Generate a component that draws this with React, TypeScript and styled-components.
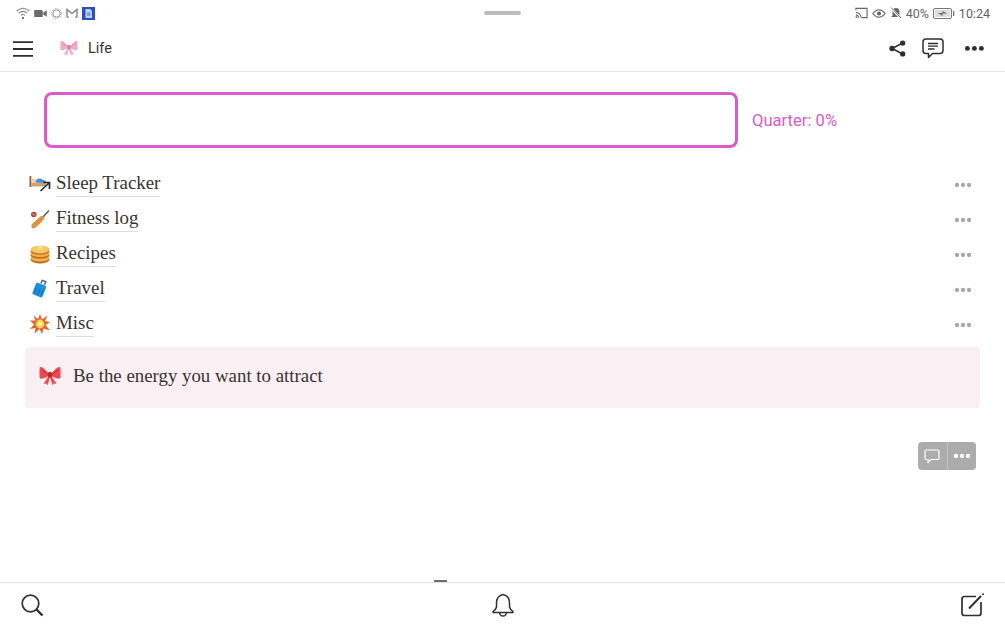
import React from 'react';
import styled, { createGlobalStyle } from 'styled-components';

const GlobalStyle = createGlobalStyle`
  html, body { margin: 0; padding: 0; background: #fff; }
  body { font-family: "Roboto", "Liberation Sans", sans-serif; }
`;

const Page = styled.div`
  position: relative;
  width: 1005px;
  height: 628px;
  display: flex;
  flex-direction: column;
  overflow: hidden;
  background: #fff;
`;

const StatusBar = styled.div`
  height: 26px;
  flex: none;
  display: flex;
  align-items: center;
  justify-content: space-between;
  padding: 0 15px 0 16px;
  color: #6f6f6f;
  font-size: 12px;
`;

const StatusGroup = styled.div`
  display: flex;
  align-items: center;
  gap: 4px;
`;

const DragHandle = styled.div`
  position: absolute;
  top: 11px;
  left: 484px;
  width: 37px;
  height: 4px;
  border-radius: 2px;
  background: #bdbdbd;
`;

const Clock = styled.span`
  font-size: 12.5px;
  color: #5f5f5f;
`;

const Percent = styled.span`
  font-size: 12.5px;
  color: #666;
`;

const TopBar = styled.header`
  height: 45px;
  flex: none;
  display: flex;
  align-items: center;
  padding: 0 20px 0 13px;
  border-bottom: 1px solid #e4e4e4;
`;

const Title = styled.span`
  margin-left: 10px;
  font-size: 14.5px;
  color: #37352f;
`;

const PageIcon = styled.span`
  display: flex;
  margin-left: 27px;
`;

const TopActions = styled.div`
  margin-left: auto;
  display: flex;
  align-items: center;
  gap: 16px;
`;

const MoreButton = styled.span`
  display: flex;
  margin-left: 4px;
`;

const Content = styled.main`
  flex: 1;
  padding: 20px 25px 0;
`;

const ProgressRow = styled.div`
  display: flex;
  align-items: center;
  padding-left: 19px;
  height: 56px;
  gap: 14px;
`;

const ProgressBox = styled.div`
  width: 694px;
  height: 56px;
  box-sizing: border-box;
  border: 3px solid #dc5bc6;
  border-radius: 8px;
`;

const ProgressLabel = styled.span`
  font-size: 16.6px;
  color: #d95cc4;
`;

const PageList = styled.div`
  display: flex;
  flex-direction: column;
  margin-top: 17px;
  padding-right: 5px;
`;

const PageRow = styled.div`
  height: 35px;
  display: flex;
  align-items: center;
  padding-left: 4px;
`;

const RowIcon = styled.span`
  width: 22px;
  height: 22px;
  margin: 2px 5px 0 0;
  display: flex;
  align-items: center;
  justify-content: center;
  flex: none;
`;

const PageName = styled.span`
  font-family: "Liberation Serif", "Times New Roman", serif;
  font-size: 18.9px;
  line-height: 26px;
  height: 26px;
  margin-top: 1px;
  color: #37352f;
  border-bottom: 1px solid #dedddb;
`;

const RowMenu = styled.span`
  margin-left: auto;
  margin-top: 4px;
  display: flex;
  padding-right: 3px;
`;

const Callout = styled.div`
  height: 61px;
  box-sizing: border-box;
  margin-top: 7px;
  display: flex;
  align-items: center;
  gap: 12px;
  padding: 0 14px 4px;
  border-radius: 4px;
  background: #faeff3;
`;

const CalloutText = styled.span`
  font-family: "Liberation Serif", "Times New Roman", serif;
  font-size: 18.85px;
  color: #37352f;
`;

const FloatingActions = styled.div`
  position: absolute;
  top: 442px;
  left: 918px;
  width: 58px;
  height: 28px;
  display: flex;
  border-radius: 4px;
  overflow: hidden;
  background: #acacac;
`;

const FloatingButton = styled.span<{ $divided?: boolean }>`
  flex: 1;
  display: flex;
  align-items: center;
  justify-content: center;
  border-left: ${(p) => (p.$divided ? '1px solid #c4c4c4' : 'none')};
`;

const BottomBar = styled.footer`
  height: 46px;
  flex: none;
  display: flex;
  align-items: center;
  justify-content: space-between;
  padding: 0 20px 2px 20px;
  box-sizing: border-box;
  border-top: 1px solid #dfdfdf;
`;

const SheetGrip = styled.div`
  position: absolute;
  top: 580px;
  left: 434px;
  width: 13px;
  height: 2px;
  background: #6d6d6d;
`;

const Dots = ({ color, size = 3, gap = 6 }: { color: string; size?: number; gap?: number }) => (
  <svg width={gap * 2 + size * 2} height={size * 2} viewBox={`0 0 ${gap * 2 + size * 2} ${size * 2}`}>
    {[0, 1, 2].map((i) => (
      <circle key={i} cx={size + i * gap} cy={size} r={size * 0.72} fill={color} />
    ))}
  </svg>
);

const Bow = ({ light, width }: { light?: boolean; width: number }) => {
  const main = light ? '#f0aec4' : '#f0484e';
  const dark = light ? '#d9829f' : '#c4252c';
  return (
    <svg width={width} viewBox="0 0 22 20">
      <path d="M9.5 7.5 Q6 2.5 2.5 1 Q0.5 0.5 0.5 3 L0.5 11 Q0.8 13.5 3.5 12.5 Q7 11.5 9.5 10 Z" fill={main} />
      <path d="M12.5 7.5 Q16 2.5 19.5 1 Q21.5 0.5 21.5 3 L21.5 11 Q21.2 13.5 18.5 12.5 Q15 11.5 12.5 10 Z" fill={main} />
      <path d="M9.5 10 L4.5 18 L7.5 17.5 L8.5 19.5 L11 11 Z" fill={main} />
      <path d="M12.5 10 L17.5 18 L14.5 17.5 L13.5 19.5 L11 11 Z" fill={main} />
      <path d="M3 4 Q6 6 8.5 8 M19 4 Q16 6 13.5 8" stroke={dark} strokeWidth="0.9" fill="none" />
      <rect x="8.8" y="6" width="4.4" height="5.5" rx="1.6" fill={dark} />
    </svg>
  );
};

const BedIcon = () => (
  <svg width="22" height="17" viewBox="0 0 22 17">
    <rect x="0.5" y="1" width="1.8" height="11" fill="#8f6238" />
    <rect x="2" y="7.5" width="15" height="4" fill="#c9a27a" />
    <rect x="2.5" y="3.5" width="5" height="4" rx="1" fill="#f0d2b0" />
    <path d="M6.5 7.5 Q7.5 3 11 3.5 L17 6 V8 Z" fill="#3f8fd6" />
    <path d="M11.5 16 L20 8 M14.5 7.5 H20.5 V14" stroke="#2b2b2b" strokeWidth="1.7" fill="none" />
  </svg>
);

const CricketIcon = () => (
  <svg width="20" height="20" viewBox="0 0 20 20">
    <path d="M2.5 19 Q0.5 17.5 2 15 L11.5 6.5 L14.5 9.5 Q9.5 15.5 5.5 18.5 Q4 20 2.5 19Z" fill="#e0903f" />
    <path d="M13 8 L19 1.5" stroke="#7a5a3c" strokeWidth="1.6" />
    <circle cx="3.8" cy="5.5" r="2.8" fill="#b4473a" />
    <path d="M2 4.5 L5.5 6.5" stroke="#eecfc8" strokeWidth="0.6" />
  </svg>
);

const PancakeIcon = () => (
  <svg width="20" height="20" viewBox="0 0 20 20">
    <ellipse cx="10" cy="15.5" rx="9.5" ry="4" fill="#bd6f1a" />
    <ellipse cx="10" cy="14" rx="9.5" ry="3.6" fill="#f0b04a" />
    <ellipse cx="10" cy="11" rx="9.5" ry="3.8" fill="#bd6f1a" />
    <ellipse cx="10" cy="9.5" rx="9.5" ry="3.6" fill="#f0b04a" />
    <ellipse cx="10" cy="7" rx="9.5" ry="3.8" fill="#bd6f1a" />
    <ellipse cx="10" cy="5.5" rx="9.5" ry="4" fill="#f5c566" />
    <rect x="7.5" y="2" width="5" height="3.2" rx="1" fill="#fde58a" />
  </svg>
);

const LuggageIcon = () => (
  <svg width="18" height="19" viewBox="0 0 20 20">
    <rect x="3.5" y="5" width="12" height="14" rx="2" transform="rotate(22 10 11)" fill="#1f8fd8" />
    <path d="M11 4.5 L12.5 1 L16.5 2.5 L15 6" stroke="#48667c" strokeWidth="1.6" fill="none" />
    <path d="M6.5 8.5 L3.8 15 M10 10 L7.5 16.5 M13.5 11.5 L11 18" stroke="#0f6aa8" strokeWidth="1" />
  </svg>
);

const BoomIcon = () => (
  <svg width="20" height="20" viewBox="0 0 20 20">
    <path d="M10 0 L12 5.5 L17.5 1.5 L15 7 L20 8 L15.5 11 L20 16.5 L13.5 14.5 L12 20 L9.5 15 L4.5 19.5 L5.5 14 L0 15 L4 10.5 L0 6.5 L5.5 6.5 L3.5 1.5 L8 5Z" fill="#e8622c" />
    <circle cx="10" cy="10" r="4.4" fill="#fbd54a" />
    <circle cx="10" cy="10" r="2" fill="#fff3b8" />
  </svg>
);

const MenuIcon = () => (
  <svg width="20" height="16" viewBox="0 0 20 16">
    <path d="M0 1.2 H20 M0 8 H20 M0 14.8 H20" stroke="#2f2f2f" strokeWidth="1.8" />
  </svg>
);

const ShareIcon = () => (
  <svg width="17" height="17" viewBox="0 0 18 18">
    <circle cx="14.5" cy="3.2" r="2.8" fill="#2f2f2f" />
    <circle cx="3.2" cy="9" r="2.8" fill="#2f2f2f" />
    <circle cx="14.5" cy="14.8" r="2.8" fill="#2f2f2f" />
    <path d="M14.5 3.2 L3.2 9 L14.5 14.8" stroke="#2f2f2f" strokeWidth="1.6" fill="none" />
  </svg>
);

const CommentIcon = () => (
  <svg width="22" height="21" viewBox="0 0 22 21">
    <path d="M4 1 H18 Q21 1 21 4 V12.5 Q21 15.5 18 15.5 H10.5 L6.5 19.5 V15.5 H4 Q1 15.5 1 12.5 V4 Q1 1 4 1Z" fill="none" stroke="#2f2f2f" strokeWidth="1.5" strokeLinejoin="round" />
    <path d="M6 5.5 H16 M6 8.2 H16 M6 11 H12.5" stroke="#2f2f2f" strokeWidth="1.3" />
  </svg>
);

const WifiIcon = () => (
  <svg width="14" height="13" viewBox="0 0 14 13" fill="none" stroke="#8a8a8a" strokeWidth="1.1">
    <path d="M0.7 4 Q7 -1.5 13.3 4" />
    <path d="M2.7 6.2 Q7 2.5 11.3 6.2" />
    <path d="M4.8 8.4 Q7 6.6 9.2 8.4" />
    <circle cx="7" cy="11" r="1.1" fill="#555" stroke="none" />
  </svg>
);

const VideoIcon = () => (
  <svg width="13" height="9" viewBox="0 0 14 10">
    <rect x="0" y="1" width="9.5" height="8" rx="1" fill="#6a6a6a" />
    <path d="M10 4 L14 1.5 V8.5 L10 6Z" fill="#6a6a6a" />
  </svg>
);

const GearIcon = () => (
  <svg width="11" height="11" viewBox="0 0 12 12" fill="none" stroke="#8a8a8a">
    <circle cx="6" cy="6" r="4" strokeWidth="1" />
    <circle cx="6" cy="6" r="5.3" strokeWidth="1" strokeDasharray="1.4 1.4" />
  </svg>
);

const MailIcon = () => (
  <svg width="12" height="10" viewBox="0 0 13 11" fill="none" stroke="#808080" strokeWidth="1.5">
    <path d="M1 10 V1.5 L6.5 6 L12 1.5 V10 M1 10 H3 M10 10 H12" />
  </svg>
);

const DocIcon = () => (
  <svg width="13" height="13" viewBox="0 0 13 13">
    <rect width="13" height="13" fill="#2a4fc4" />
    <path d="M3.5 2 H8 L10 4 V11 H3.5Z" fill="#bcd6f7" />
    <path d="M5 6 H8.5 M5 8 H8.5" stroke="#2a4fc4" strokeWidth="0.8" />
  </svg>
);

const CastIcon = () => (
  <svg width="13" height="12" viewBox="0 0 14 12" fill="none" stroke="#666" strokeWidth="1.2">
    <path d="M1 3 V1 H13 V11 H7" />
    <path d="M1 5.5 Q6 6 6.5 11 M1 8 Q3.5 8.5 4 11" />
    <circle cx="1.5" cy="10.5" r="0.9" fill="#666" stroke="none" />
  </svg>
);

const EyeIcon = () => (
  <svg width="14" height="11" viewBox="0 0 15 11" fill="none" stroke="#666" strokeWidth="1.2">
    <path d="M0.8 5.5 Q7.5 -2.5 14.2 5.5 Q7.5 13.5 0.8 5.5Z" />
    <circle cx="7.5" cy="5.5" r="2.2" fill="#666" stroke="none" />
  </svg>
);

const MutedBellIcon = () => (
  <svg width="12" height="12" viewBox="0 0 12 12">
    <path d="M6 1 Q9.5 1 9.5 5 V8.5 L11 10 H1 L2.5 8.5 V5 Q2.5 1 6 1Z" fill="#666" />
    <path d="M1 1 L11 11.5" stroke="#fff" strokeWidth="2.2" />
    <path d="M1 0.5 L11 11" stroke="#666" strokeWidth="1" />
  </svg>
);

const BatteryIcon = () => (
  <svg width="22" height="11" viewBox="0 0 22 11">
    <rect x="0.5" y="0.5" width="18" height="10" rx="1.5" fill="none" stroke="#777" />
    <rect x="2" y="2" width="15" height="7" fill="#ddd" />
    <path d="M5 5 H9.5 V3 L14 5.5 H9.5 V8Z" fill="#666" />
    <rect x="20" y="3" width="1.3" height="5" fill="#777" />
  </svg>
);

const SearchIcon = () => (
  <svg width="24" height="24" viewBox="0 0 24 24" fill="none" stroke="#2f2f2f">
    <circle cx="10.5" cy="10.5" r="8.3" strokeWidth="1.7" />
    <path d="M16.5 16.5 L22.5 22.5" strokeWidth="2.4" />
  </svg>
);

const BellIcon = () => (
  <svg width="22" height="24" viewBox="0 0 22 24" fill="none" stroke="#2f2f2f" strokeWidth="1.5">
    <path d="M11 1.5 Q17.5 3 17.5 10 V14 Q18 16.5 21 18.5 V19.5 H1 V18.5 Q4 16.5 4.5 14 V10 Q4.5 3 11 1.5Z" strokeLinejoin="round" />
    <path d="M7.5 19.5 Q8 23 11 23 Q14 23 14.5 19.5" />
  </svg>
);

const ComposeIcon = () => (
  <svg width="24" height="24" viewBox="0 0 24 24" fill="none" stroke="#2f2f2f">
    <path d="M15 3.5 H3.5 Q1 3.5 1 6 V20 Q1 22.5 3.5 22.5 H17.5 Q20 22.5 20 20 V9" strokeWidth="1.7" />
    <path d="M8 15.5 L20 3" strokeWidth="1.9" />
    <circle cx="22" cy="1.3" r="1" fill="#2f2f2f" stroke="none" />
  </svg>
);

const FloatComment = () => (
  <svg width="16" height="15" viewBox="0 0 16 15" fill="none" stroke="#fff" strokeWidth="1.2">
    <path d="M2.5 1 H13.5 Q15 1 15 2.5 V9 Q15 10.5 13.5 10.5 H7 L4 13.5 V10.5 H2.5 Q1 10.5 1 9 V2.5 Q1 1 2.5 1Z" strokeLinejoin="round" />
  </svg>
);

const pages = [
  { name: 'Sleep Tracker', icon: <BedIcon /> },
  { name: 'Fitness log', icon: <CricketIcon /> },
  { name: 'Recipes', icon: <PancakeIcon /> },
  { name: 'Travel', icon: <LuggageIcon /> },
  { name: 'Misc', icon: <BoomIcon /> },
];

const App = () => {
  return (
    <Page>
      <GlobalStyle />
      <StatusBar>
        <StatusGroup>
          <WifiIcon />
          <VideoIcon />
          <GearIcon />
          <MailIcon />
          <DocIcon />
        </StatusGroup>
        <StatusGroup>
          <CastIcon />
          <EyeIcon />
          <MutedBellIcon />
          <Percent>40%</Percent>
          <BatteryIcon />
          <Clock>10:24</Clock>
        </StatusGroup>
      </StatusBar>
      <DragHandle />
      <TopBar>
        <MenuIcon />
        <PageIcon>
          <Bow light width={18} />
        </PageIcon>
        <Title>Life</Title>
        <TopActions>
          <ShareIcon />
          <CommentIcon />
          <MoreButton>
            <Dots color="#2f2f2f" size={3.4} gap={7} />
          </MoreButton>
        </TopActions>
      </TopBar>
      <Content>
        <ProgressRow>
          <ProgressBox />
          <ProgressLabel>Quarter: 0%</ProgressLabel>
        </ProgressRow>
        <PageList>
          {pages.map((page) => (
            <PageRow key={page.name}>
              <RowIcon>{page.icon}</RowIcon>
              <PageName>{page.name}</PageName>
              <RowMenu>
                <Dots color="#a8a8a8" />
              </RowMenu>
            </PageRow>
          ))}
        </PageList>
        <Callout>
          <Bow width={22} />
          <CalloutText>Be the energy you want to attract</CalloutText>
        </Callout>
      </Content>
      <FloatingActions>
        <FloatingButton>
          <FloatComment />
        </FloatingButton>
        <FloatingButton $divided>
          <Dots color="#fff" />
        </FloatingButton>
      </FloatingActions>
      <SheetGrip />
      <BottomBar>
        <SearchIcon />
        <BellIcon />
        <ComposeIcon />
      </BottomBar>
    </Page>
  );
};

export default App;
